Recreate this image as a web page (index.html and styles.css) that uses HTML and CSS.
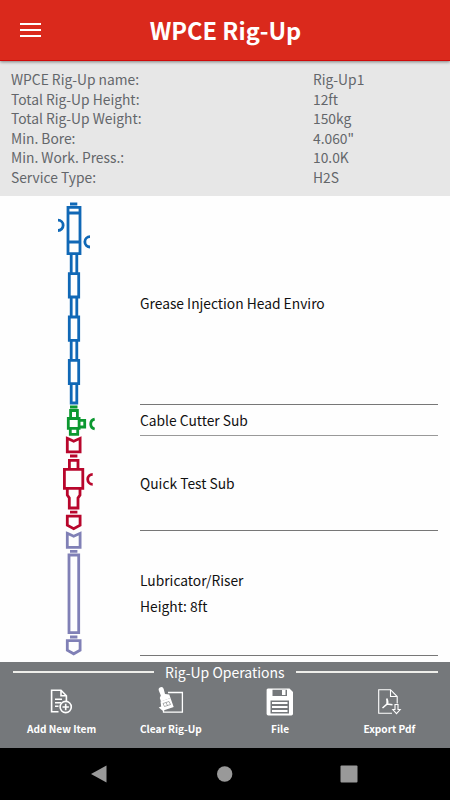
FILE: index.html
```html
<!DOCTYPE html>
<html lang="en">
<head>
<meta charset="utf-8">
<title>WPCE Rig-Up</title>
<link rel="stylesheet" href="styles.css">
</head>
<body>
<header class="topbar">
  <button class="menu" aria-label="Menu"><span></span><span></span><span></span></button>
  <h1>WPCE Rig-Up</h1>
</header>

<dl class="summary">
  <dt>WPCE Rig-Up name:</dt><dd>Rig-Up1</dd>
  <dt>Total Rig-Up Height:</dt><dd>12ft</dd>
  <dt>Total Rig-Up Weight:</dt><dd>150kg</dd>
  <dt>Min. Bore:</dt><dd>4.060"</dd>
  <dt>Min. Work. Press.:</dt><dd>10.0K</dd>
  <dt>Service Type:</dt><dd>H2S</dd>
</dl>

<main class="stack">
  <section class="item item-grease">
    <svg class="part blue" viewBox="40 196 80 209">
      <path d="M70 204h7.3M68 207.4h12v46.3H68zM68 213h12M68 242h12M71.2 255v18M76.8 255v18M69.3 273.7h9.4v23.3h-9.4zM71.2 298v18M76.8 298v18M69.3 317h9.4v23.3h-9.4zM71.2 341v18M76.8 341v18M69.3 360.4h9.4v23.3h-9.4zM71.2 385v18h5.6v-18"/>
      <path d="M58 220.2a5 5 0 0 1 0 10.3M90 236.7a5 5 0 0 0 0 10.3"/>
    </svg>
    <div class="text"><p>Grease Injection Head Enviro</p></div>
  </section>
  <section class="item item-cutter">
    <svg class="part green" viewBox="40 405 80 31">
      <path d="M70 407h7.5M70.6 418v-7.5h6.8v7.5M68.3 418.5h10.8v9.8H68.3zM80 420.3h4.7v6.7H80M70.3 429v5.4h7.4V429"/>
      <path d="M94.7 419.2a5 5 0 0 0 0 9.8"/>
    </svg>
    <div class="text"><p>Cable Cutter Sub</p></div>
  </section>
  <section class="item item-test">
    <svg class="part red" viewBox="40 436 80 95">
      <path d="M67.3 438.3l6.4 2.9 6.4-2.9v13.6H67.3zM70 456h7.4M69.4 468v-7.6h8.6v7.6M64.4 469.4h18.4v19H64.4zM67.3 489v6l2 3v10h8.7v-10l2-3v-6M70 512.2h7.4M67.3 516.2h12.8v9l-6.4 3.5-6.4-3.5z"/>
      <path d="M92.7 474.3a5 5 0 0 0 0 10"/>
    </svg>
    <div class="text"><p>Quick Test Sub</p></div>
  </section>
  <section class="item item-riser">
    <svg class="part violet" viewBox="40 531 80 125">
      <path d="M67.3 533.3l6.4 2.9 6.4-2.9v14H67.3zM70 551.4h7.4M69 555h9.7v77.7H69zM70 637h7.4M67.3 640.7h12.8v9.5l-6.4 3.6-6.4-3.6z"/>
    </svg>
    <div class="text"><p>Lubricator/Riser</p><p>Height: 8ft</p></div>
  </section>
</main>

<footer class="operations">
  <h2>Rig-Up Operations</h2>
  <nav class="actions">
    <a class="action">
      <svg viewBox="45 684 34 34" fill="none" stroke="#fff" stroke-width="1.6">
        <path d="M58.5 711.7H51.6V690.3H61l5.4 5.5v5.5M61 690.3v5.5h5.4M55 699.2h7M55 702.7h6M55 706.2h3.5"/>
        <circle cx="65.7" cy="707" r="5.6"/><path d="M65.7 703.8v6.4M62.5 707h6.4"/>
      </svg>
      <span>Add New Item</span>
    </a>
    <a class="action">
      <svg viewBox="154 684 34 34" fill="none" stroke="#fff" stroke-width="1.3">
        <path d="M168 692.500h14.400v19.700H163.500V709"/>
        <path class="solid" d="M158.800 690.500a2.500 2.500 0 0 1 4.900-1.500l1.300 5 4.300.5 1.200 3.500-9.500 3.500-1.200-3.500 1-2.500z"/>
        <path class="solid" d="M160.500 701.500l10-3.500 3.200 9-11 3.700-4-3.200 2.500-1z"/>
        <path stroke="#75787b" stroke-width=".6" d="M163 703.500l1.500 3M166 702.500l1.500 3M169 701.500l1.500 3M163 703.500l6-2M164.500 706.500l6-2"/>
      </svg>
      <span>Clear Rig-Up</span>
    </a>
    <a class="action">
      <svg viewBox="263 684 34 34">
        <path fill="#fff" d="M268 688.500h21.500l3.500 3.500v21.800q0 1.700-1.700 1.700h-23q-1.700 0-1.700-1.700V690q0-1.500 1.400-1.500z"/>
        <path fill="#75787b" d="M272.500 689.800H287v6.200h-14.500zM270.500 700.500h18.500v13h-18.500z"/>
        <path fill="#fff" d="M282 690h3.500v5H282zM272 702h15.500v2H272zM272 706h15.500v2H272zM272 710h15.500v2H272z"/>
      </svg>
      <span>File</span>
    </a>
    <a class="action">
      <svg viewBox="373 684 34 34" fill="none" stroke="#fff" stroke-width="1.1">
        <path d="M393 713.300H379.700V689.700H391.500l6.700 6.800v7M391.500 689.700v6.800h6.700"/>
        <path stroke-width="1.5" d="M387.700 698.500q.8 3 .3 5.500l-4.500 4M388 704l5.500.8M388 704q1.500-1 0-5"/>
        <path d="M396 704.500h3v5h2.200l-3.700 4.200-3.700-4.200h2.200z"/>
      </svg>
      <span>Export Pdf</span>
    </a>
  </nav>
</footer>

<div class="sysnav">
  <svg viewBox="0 0 18 18"><path d="M1 9L16.500 .5v17z"/></svg>
  <svg viewBox="0 0 18 18"><circle cx="9.700" cy="9" r="7.700"/></svg>
  <svg viewBox="0 0 18 18"><rect x=".5" y=".5" width="17" height="17" rx="1"/></svg>
</div>
</body>
</html>
```
FILE: styles.css
```css
* { box-sizing: border-box; margin: 0; padding: 0; }

body {
  width: 450px;
  height: 800px;
  display: flex;
  flex-direction: column;
  overflow: hidden;
  background: #fefefe;
  font: 13.8px/20px "Noto Sans CJK SC", sans-serif;
}

.topbar {
  position: relative;
  height: 61px;
  flex: none;
  display: grid;
  grid-template-columns: 60px 1fr 60px;
  align-items: center;
  background: #da291c;
  border-bottom: 1px solid #d00b0b;
  box-shadow: 0 1px 3px rgba(0, 0, 0, .45);
  color: #fff;
}
.topbar h1 { padding-left: 1px; text-align: center; font-size: 23.6px; line-height: 36px; font-weight: 700; }
.menu {
  display: flex;
  flex-direction: column;
  gap: 4px;
  width: 21px;
  margin-left: 20px;
  border: 0;
  background: none;
}
.menu span { height: 2px; background: #fff; }

.summary {
  height: 135px;
  flex: none;
  padding: 8px 11px 0;
  display: grid;
  grid-template-columns: 302px 1fr;
  grid-auto-rows: 19.6px;
  background: #e7e7e7;
  color: #63666a;
}

.stack { flex: none; height: 466px; }
.item { display: grid; grid-template-columns: 100px 298px; padding-left: 40px; }
.item-grease { height: 209px; }
.item-grease .text { padding-top: 5px; }
.item-cutter { height: 31px; }
.item-cutter .text { border-color: #999; }
.item-test { height: 95px; }
.item-riser { height: 125px; }
.part { width: 80px; height: 100%; overflow: visible; fill: none; stroke: currentColor; stroke-width: 2.8; }
.blue { color: #1068b6; }
.green { color: #0c9830; }
.red { color: #b8062c; }
.violet { color: #8080b6; }
.text {
  display: flex;
  flex-direction: column;
  justify-content: center;
  gap: 6px;
  border-bottom: 1px solid #777;
  color: #111;
}

.operations { height: 86px; flex: none; background: #75787b; color: #fff; }
.operations h2 {
  display: flex;
  align-items: center;
  gap: 11px;
  padding: 0 12px 0 13px;
  font-size: 14px;
  font-weight: 400;
  line-height: 21px;
}
.operations h2::before,
.operations h2::after { content: ""; flex: 1; height: 2px; margin-top: -1px; background: #eeeeea; }
.operations h2::before { flex: none; width: 141px; }
.actions { display: grid; grid-template-columns: repeat(4, 1fr); padding: 0 6px 0 7px; }
.action { display: flex; flex-direction: column; align-items: center; font-size: 10.1px; font-weight: 700; line-height: 16px; }
.action svg { width: 34px; height: 34px; margin-top: 1px; }
.action span { margin-top: 3px; }
.solid { fill: #fff; stroke: none; }

.sysnav {
  height: 52px;
  flex: none;
  display: flex;
  align-items: center;
  justify-content: space-between;
  padding: 0 92px 0 90px;
  background: #000;
}
.sysnav svg { width: 18px; height: 18px; fill: #999; }
```
